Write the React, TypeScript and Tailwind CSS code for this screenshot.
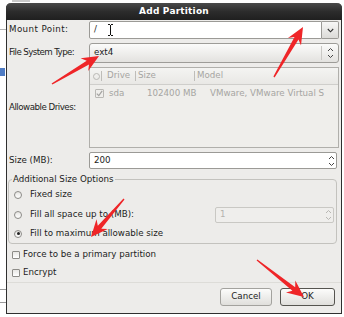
const arrow = (x1: number, y1: number, x2: number, y2: number) => {
  const dx = x2 - x1;
  const dy = y2 - y1;
  const len = Math.hypot(dx, dy);
  const ux = dx / len;
  const uy = dy / len;
  const nx = -uy;
  const ny = ux;
  const hl = 17;
  const hw = 7.5;
  const nw = 2.3;
  const tw = 0.7;
  const bx = x2 - ux * hl;
  const by = y2 - uy * hl;
  const kx = x2 - ux * (hl - 4);
  const ky = y2 - uy * (hl - 4);
  const pts = [
    [x1 + nx * tw, y1 + ny * tw],
    [kx + nx * nw, ky + ny * nw],
    [bx + nx * hw, by + ny * hw],
    [x2, y2],
    [bx - nx * hw, by - ny * hw],
    [kx - nx * nw, ky - ny * nw],
    [x1 - nx * tw, y1 - ny * tw],
  ];
  return pts.map((p) => p.map((v) => v.toFixed(1)).join(",")).join(" ");
};

const SpinArrows = ({ dim }: { dim?: boolean }) => (
  <svg width="7" height="14" viewBox="0 0 7 14" className="shrink-0">
    <path d="M1 5 L3.5 2.5 L6 5" fill="none" stroke={dim ? "#b8b7b3" : "#444"} strokeWidth="1" />
    <path d="M1 9 L3.5 11.5 L6 9" fill="none" stroke={dim ? "#b8b7b3" : "#444"} strokeWidth="1" />
  </svg>
);

const Radio = ({ on, label }: { on?: boolean; label: string }) => (
  <div className="flex items-center gap-[8px]">
    <div className="w-[8px] h-[8px] rounded-full border border-[#8d8c88] bg-gradient-to-b from-[#e6e5e2] to-white flex items-center justify-center">
      {on && <div className="w-[3px] h-[3px] rounded-full bg-[#222]" />}
    </div>
    <span>{label}</span>
  </div>
);

const Check = ({ label }: { label: string }) => (
  <div className="flex items-center gap-[3px] h-[18px] pl-[5px]">
    <div className="w-[8px] h-[8px] border border-[#8d8c88] bg-gradient-to-b from-[#e8e7e4] to-white rounded-[1px]" />
    <span>{label}</span>
  </div>
);

export default function App() {
  return (
    <div className="relative w-[344px] h-[317px] overflow-hidden bg-white text-[8.7px] text-[#1c1c1c] font-['DejaVu_Sans',sans-serif]">
      <div className="absolute left-[12px] top-0 w-[18px] h-[2px] bg-[#c8c8c8]" />
      <div className="absolute left-0 top-[29px] w-[6px] h-px bg-[#b5b5b5]" />
      <div className="absolute left-0 top-[68px] w-[5px] h-[8px] bg-[#4f7cc4]" />
      <div className="absolute left-0 top-[289px] w-[6px] h-px bg-[#9a9a9a]" />
      <div className="absolute left-0 top-[302px] w-[6px] h-px bg-[#9a9a9a]" />

      <div className="relative ml-[6px] mt-[3px] w-[336px] h-[311px] flex flex-col bg-[#edecea] border-x border-b border-[#2f2f2f] rounded-t-[5px]">
        <div className="h-[17px] -mx-px rounded-t-[5px] bg-gradient-to-b from-[#4a4a4a] via-[#2c2c2c] to-[#1f1f1f] flex items-center justify-center">
          <span className="text-white font-bold text-[9px] tracking-[0.2px]">Add Partition</span>
        </div>

        <div className="flex flex-col pt-[1px]">
          <div className="flex items-center h-[18px]">
            <div className="w-[82px] pl-[2px] tracking-[0.4px]">Mount Point:</div>
            <div className="flex-1 mr-[2px] h-full flex">
              <div className="relative flex-1 bg-white border border-[#9b9a96] rounded-l-[2px] flex items-center pl-[4px]">
                <span>/</span>
                <svg width="7" height="12" viewBox="0 0 7 12" className="absolute left-[17px] top-[2px]">
                  <path d="M1 0.5 H3 M4 0.5 H6 M3.5 1 V11 M1 11.5 H3 M4 11.5 H6" stroke="#111" strokeWidth="1" fill="none" />
                </svg>
              </div>
              <div className="w-[17px] border border-l-0 border-[#9b9a96] rounded-r-[2px] bg-gradient-to-b from-[#f7f7f6] to-[#dcdbd8] flex items-center justify-center">
                <svg width="7" height="5" viewBox="0 0 7 5">
                  <path d="M0.8 1 L3.5 3.8 L6.2 1" fill="none" stroke="#333" strokeWidth="1.1" />
                </svg>
              </div>
            </div>
          </div>

          <div className="flex items-center h-[20px] mt-[4px]">
            <div className="w-[82px] pl-[2px] tracking-[-0.6px]">File System Type:</div>
            <div className="flex-1 mr-[2px] h-full flex items-center rounded-[3px] border border-[#9d9c98] bg-gradient-to-b from-[#fbfbfa] to-[#e3e2df] pl-[4px]">
              <span className="flex-1">ext4</span>
              <div className="w-px h-[14px] bg-[#c9c8c4]" />
              <div className="w-[16px] flex justify-center">
                <SpinArrows />
              </div>
            </div>
          </div>

          <div className="flex items-center h-[81px] mt-[4px]">
            <div className="w-[82px] pl-[2px] tracking-[-0.5px]">Allowable Drives:</div>
            <div className="flex-1 mr-[2px] h-full border border-[#b0afab] bg-[#efeeeb] flex flex-col text-[#a6a5a2] overflow-hidden">
              <div className="h-[17px] flex items-center border-b border-[#cfcecb] bg-gradient-to-b from-[#f4f4f2] to-[#e9e8e5] whitespace-nowrap">
                <div className="w-[11px] h-full flex items-center justify-end pr-[1px]">
                  <div className="w-[7px] h-[7px] rounded-full border border-[#b9b8b4]" />
                </div>
                <div className="w-px h-[10px] bg-[#bebdb9]" />
                <div className="w-[33px] pl-[5px]">Drive</div>
                <div className="w-px h-[10px] bg-[#bebdb9]" />
                <div className="w-[58px] pl-[2px]">Size</div>
                <div className="w-px h-[10px] bg-[#bebdb9]" />
                <div className="pl-[2px]">Model</div>
              </div>
              <div className="h-[17px] flex items-center whitespace-nowrap">
                <div className="w-[14px] flex justify-end">
                  <div className="w-[9px] h-[9px] border border-[#b9b8b4] rounded-[1px] flex items-center justify-center">
                    <svg width="7" height="7" viewBox="0 0 7 7">
                      <path d="M0.8 3.6 L2.8 5.6 L6.2 0.9" fill="none" stroke="#a4a3a0" strokeWidth="1.2" />
                    </svg>
                  </div>
                </div>
                <div className="w-[40px] pl-[5px]">sda</div>
                <div className="w-[66px] pl-[3px]">102400 MB</div>
                <div>VMware, VMware Virtual S</div>
              </div>
            </div>
          </div>

          <div className="flex items-center h-[17px] mt-[4px]">
            <div className="w-[82px] pl-[2px]">Size (MB):</div>
            <div className="flex-1 mr-[4px] h-full bg-white border border-[#9b9a96] rounded-[2px] flex items-center pl-[4px] pr-[1px]">
              <span className="flex-1">200</span>
              <SpinArrows />
            </div>
          </div>

          <fieldset className="mt-[5px] ml-[1px] mr-[4px] border border-[#c3c2be] rounded-[4px] pl-[5px] pr-[2px] pt-[3px] pb-[1px]">
            <legend className="ml-[-2px] px-[1px] leading-[11px]">Additional Size Options</legend>
            <div className="h-[14px] flex items-center">
              <Radio label="Fixed size" />
            </div>
            <div className="h-[18px] mt-[4px] flex items-center justify-between">
              <Radio label="Fill all space up to (MB):" />
              <div className="w-[119px] h-[16px] border border-[#c9c8c4] rounded-[2px] bg-[#efeeec] flex items-center pl-[4px] pr-[1px] text-[#b3b2ae]">
                <span className="flex-1">1</span>
                <SpinArrows dim />
              </div>
            </div>
            <div className="h-[16px] mt-[2px] flex items-center">
              <Radio on label="Fill to maximum allowable size" />
            </div>
          </fieldset>

          <div className="mt-[2px]">
            <Check label="Force to be a primary partition" />
            <Check label="Encrypt" />
          </div>

          <div className="h-px bg-[#dddcd8]" />

          <div className="mt-[5px] flex justify-end gap-[8px] mr-[6px]">
            <button className="w-[52px] h-[18px] rounded-[3px] border border-[#a3a29e] bg-gradient-to-b from-[#fcfcfb] to-[#e0dfdc] text-[8.7px]">
              Cancel
            </button>
            <button className="w-[55px] h-[18px] rounded-[3px] border border-[#55544f] bg-gradient-to-b from-[#fcfcfb] to-[#e0dfdc] text-[8.7px]">
              OK
            </button>
          </div>
        </div>
      </div>

      <svg className="absolute inset-0 pointer-events-none" width="344" height="317">
        <polygon points={arrow(52, 84, 99, 56)} fill="#ef2528" />
        <polygon points={arrow(274, 77, 303, 27)} fill="#ef2528" />
        <polygon points={arrow(124, 199, 91, 237)} fill="#ef2528" />
        <polygon points={arrow(257, 260, 304, 297)} fill="#ef2528" />
      </svg>
    </div>
  );
}
